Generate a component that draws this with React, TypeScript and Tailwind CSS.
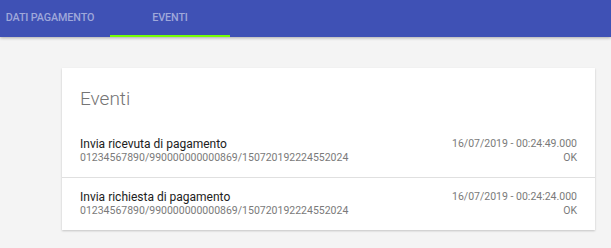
import React from "react";

const events = [
  {
    id: 1,
    title: "Invia ricevuta di pagamento",
    code: "01234567890/990000000000869/150720192224552024",
    date: "16/07/2019 - 00:24:49.000",
    status: "OK",
  },
  {
    id: 2,
    title: "Invia richiesta di pagamento",
    code: "01234567890/990000000000869/150720192224552024",
    date: "16/07/2019 - 00:24:24.000",
    status: "OK",
  },
];

export default function App() {
  return (
    <div className="min-h-[248px] w-[611px] bg-[#f4f4f4] font-['Roboto',sans-serif]">
      <header className="h-[37px] bg-[#3f51b5] shadow-[0_1px_3px_rgba(0,0,0,0.3)] relative z-10">
        <nav className="flex h-full -ml-[10px]">
          <div className="w-[120px] h-full flex items-center justify-center text-[10.75px] font-medium text-[#9fa8da] tracking-[-0.1px]">
            DATI PAGAMENTO
          </div>
          <div className="w-[120px] h-full flex items-center justify-center text-[10.75px] font-medium text-[#9fa8da] tracking-[-0.1px] border-b-2 border-[#76ff03]">
            <span className="pt-[2px]">EVENTI</span>
          </div>
        </nav>
      </header>

      <main className="pt-[31px] pl-[62px] pr-[16px] pb-[18px]">
        <section className="bg-white shadow-[0_1px_2px_rgba(0,0,0,0.2)]">
          <h2 className="px-[18px] pt-[20px] pb-[15px] text-[19px] leading-[22px] font-light text-[#757575]">
            Eventi
          </h2>
          {events.map((ev, i) => (
            <div
              key={ev.id}
              className={
                "flex justify-between px-[18px] py-[12px] leading-[14px] " +
                (i > 0 ? "border-t border-[#e0e0e0]" : "")
              }
            >
              <div>
                <div className="text-[12px] text-[#212121]">{ev.title}</div>
                <div className="text-[10.5px] text-[#7a7a7a]">{ev.code}</div>
              </div>
              <div className="text-right text-[10.5px] text-[#7a7a7a]">
                <div>{ev.date}</div>
                <div>{ev.status}</div>
              </div>
            </div>
          ))}
        </section>
      </main>
    </div>
  );
}
